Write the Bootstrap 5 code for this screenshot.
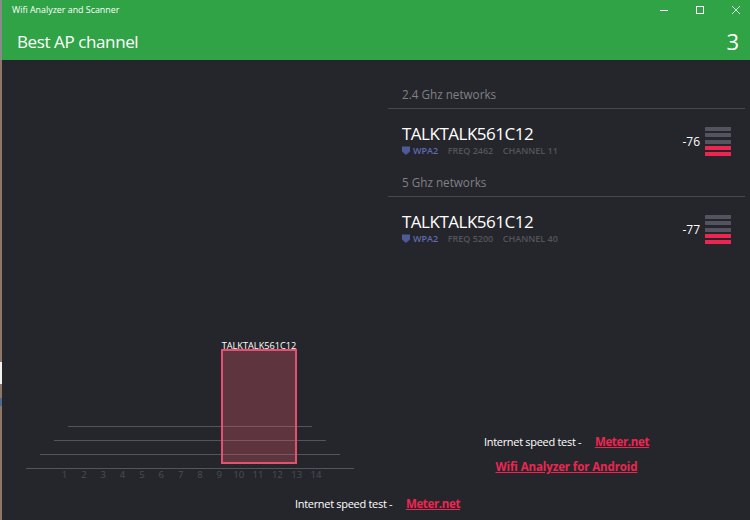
<!DOCTYPE html>
<html lang="en">
<head>
  <meta charset="UTF-8" />
  <title>Wifi Analyzer and Scanner</title>
  <link href="https://cdn.jsdelivr.net/npm/bootstrap@5.3.0/dist/css/bootstrap.min.css" rel="stylesheet">
  <style>
    html, body { height: 520px; overflow: hidden; }
    body { background: #25262b; color: #fff; font-family: "Open Sans", "Noto Sans", sans-serif; }
    .app-shell { width: 750px; height: 520px; }
    .edge-strip { width: 2px; flex: none; background: linear-gradient(to bottom, #8a8a8a 0, #8a8a8a 60px, #8f7766 60px, #8f7766 362px, #f2f2f2 362px, #f2f2f2 384px, #8f7766 384px, #8f7766 398px, #4a6a90 398px, #4a6a90 406px, #8f7766 406px); }
    .app-main { width: 748px; }
    .title-bar { height: 20px; background: #30a346; font-size: 8.9px; padding-left: 10px; }
    .win-btn { width: 36px; height: 20px; position: relative; left: 4px; }
    .page-head { height: 40px; background: #30a346; padding: 3px 11px 0 15px; font-size: 17px; letter-spacing: -.4px; }
    .page-count { font-size: 22px; letter-spacing: 0; }
    .chart-side { width: 386px; height: 437px; }
    .net-side { width: 357px; padding-top: 25px; }
    .chart-line { position: absolute; height: 1px; background: #55535f; }
    .chart-num { position: absolute; top: 408px; width: 20px; margin-left: -10px; text-align: center; font-size: 9.5px; line-height: 14px; color: #4d4c56; }
    .ap-box { position: absolute; left: 219px; top: 289px; width: 76px; height: 115px; background: rgba(230, 90, 110, .3); border: 2px solid #e5506f; }
    .ap-label { position: absolute; left: 197px; top: 280px; width: 120px; text-align: center; font-size: 9.2px; line-height: 12px; }
    .band-head { height: 24px; padding-left: 14px; font-size: 11.7px; line-height: 18px; color: #808085; border-bottom: 1px solid #47474c; }
    .net-row { height: 64px; padding: 14px 14px 0 14px; }
    .net-name { font-size: 17px; line-height: 21px; letter-spacing: -.5px; }
    .net-meta { font-size: 9px; line-height: 13px; color: #54545c; font-weight: 600; gap: 9.5px; }
    .wpa-tag { color: #5f69b0; gap: 3px; }
    .net-db { font-size: 12px; line-height: 18px; margin: 10px 5px 0 0; }
    .sig-bars { width: 26px; gap: 2.3px; margin-top: 4px; }
    .sig-bar { height: 4px; background: #55535f; }
    .sig-bar.on { background: #ee2551; }
    .net-links { margin-top: auto; padding-bottom: 15px; font-size: 11px; letter-spacing: -.3px; }
    .net-links div { height: 25px; line-height: 20px; }
    .net-links a, .foot-link a { color: #ee2551; font-weight: 700; font-size: 11.5px; letter-spacing: -.35px; margin-left: 11px; }
    .net-links a.android-link { margin-left: 0; letter-spacing: -.1px; }
    .foot-link { height: 17px; line-height: 13px; padding-left: 3px; font-size: 11px; letter-spacing: -.3px; }
  </style>
</head>
<body>
  <div class="app-shell d-flex">
    <div class="edge-strip"></div>
    <div class="app-main d-flex flex-column">
      <div class="title-bar d-flex justify-content-between align-items-center">
        <span>Wifi Analyzer and Scanner</span>
        <div class="d-flex">
          <div class="win-btn d-flex align-items-center justify-content-center">
            <svg width="10" height="10" viewBox="0 0 10 10"><path d="M1 5.5h8" stroke="#fff" fill="none"/></svg>
          </div>
          <div class="win-btn d-flex align-items-center justify-content-center">
            <svg width="10" height="10" viewBox="0 0 10 10"><rect x="1.5" y="1.5" width="7" height="7" stroke="#fff" fill="none"/></svg>
          </div>
          <div class="win-btn d-flex align-items-center justify-content-center">
            <svg width="10" height="10" viewBox="0 0 10 10"><path d="M1 1l8 8M9 1l-8 8" stroke="#fff" stroke-width=".8" fill="none"/></svg>
          </div>
        </div>
      </div>
      <div class="page-head d-flex justify-content-between align-items-center">
        <span>Best AP channel</span>
        <span class="page-count">3</span>
      </div>

      <div class="d-flex">
        <!-- channel chart -->
        <div class="chart-side position-relative" id="chart">
          <div class="chart-line" style="left:66px;width:244px;top:366px"></div>
          <div class="chart-line" style="left:52px;width:272px;top:380px"></div>
          <div class="chart-line" style="left:38px;width:300px;top:394px"></div>
          <div class="chart-line" style="left:24px;width:328px;top:408px"></div>
          <div class="ap-box"></div>
          <div class="ap-label">TALKTALK561C12</div>
        </div>

        <!-- networks -->
        <div class="net-side d-flex flex-column">
          <div class="band-head">2.4 Ghz networks</div>
          <div class="net-row d-flex justify-content-between">
            <div>
              <div class="net-name">TALKTALK561C12</div>
              <div class="net-meta d-flex">
                <span class="wpa-tag d-flex align-items-center">
                  <svg width="8" height="9" viewBox="0 0 8 9"><path d="M0 .5h8v5L4 9 0 5.5z" fill="#4f5a99"/></svg>WPA2
                </span>
                <span>FREQ 2462</span>
                <span>CHANNEL 11</span>
              </div>
            </div>
            <div class="d-flex align-items-start">
              <span class="net-db">-76</span>
              <div class="sig-bars d-flex flex-column">
                <div class="sig-bar"></div><div class="sig-bar"></div><div class="sig-bar"></div><div class="sig-bar on"></div><div class="sig-bar on"></div>
              </div>
            </div>
          </div>
          <div class="band-head">5 Ghz networks</div>
          <div class="net-row d-flex justify-content-between">
            <div>
              <div class="net-name">TALKTALK561C12</div>
              <div class="net-meta d-flex">
                <span class="wpa-tag d-flex align-items-center">
                  <svg width="8" height="9" viewBox="0 0 8 9"><path d="M0 .5h8v5L4 9 0 5.5z" fill="#4f5a99"/></svg>WPA2
                </span>
                <span>FREQ 5200</span>
                <span>CHANNEL 40</span>
              </div>
            </div>
            <div class="d-flex align-items-start">
              <span class="net-db">-77</span>
              <div class="sig-bars d-flex flex-column">
                <div class="sig-bar"></div><div class="sig-bar"></div><div class="sig-bar"></div><div class="sig-bar on"></div><div class="sig-bar on"></div>
              </div>
            </div>
          </div>
          <div class="net-links text-center">
            <div>Internet speed test - <a href="#">Meter.net</a></div>
            <div><a href="#" class="android-link">Wifi Analyzer for Android</a></div>
          </div>
        </div>
      </div>

      <div class="foot-link text-center">Internet speed test - <a href="#">Meter.net</a></div>
    </div>
  </div>

  <script src="https://cdn.jsdelivr.net/npm/bootstrap@5.3.0/dist/js/bootstrap.bundle.min.js"></script>
  <script>
    // channel numbers along the bottom of the chart
    const chart = document.getElementById('chart');
    for (let n = 1; n <= 14; n++) {
      const el = document.createElement('div');
      el.className = 'chart-num';
      el.style.left = (62.5 + (n - 1) * 19.35) + 'px';
      el.textContent = n;
      chart.appendChild(el);
    }
  </script>
</body>
</html>
